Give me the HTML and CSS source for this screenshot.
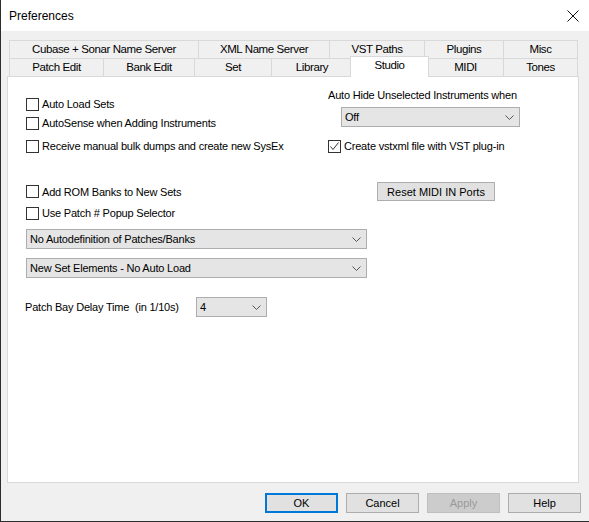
FILE: index.html
```html
<!DOCTYPE html>
<html lang="en">
<head>
    <meta charset="UTF-8">
    <title>Preferences</title>
    <link rel="stylesheet" href="styles.css">
</head>
<body>
    <div class="window">
        <div class="titlebar">
            <span class="title">Preferences</span>
            <svg class="close" width="12" height="12" viewBox="0 0 12 12">
                <path d="M0.5 0.5 L11.5 11.5 M11.5 0.5 L0.5 11.5" stroke="#111" stroke-width="1" fill="none"/>
            </svg>
        </div>

        <div class="dialog">
            <!-- two rows of tabs, Studio is the active one -->
            <div class="tabs">
                <div class="tab-row row-top">
                    <div class="tab">Cubase + Sonar Name Server</div>
                    <div class="tab">XML Name Server</div>
                    <div class="tab">VST Paths</div>
                    <div class="tab">Plugins</div>
                    <div class="tab">Misc</div>
                </div>
                <div class="tab-row row-bottom">
                    <div class="tab">Patch Edit</div>
                    <div class="tab">Bank Edit</div>
                    <div class="tab">Set</div>
                    <div class="tab">Library</div>
                    <div class="tab active">Studio</div>
                    <div class="tab">MIDI</div>
                    <div class="tab">Tones</div>
                </div>
            </div>

            <div class="panel">
                <div class="top-block">
                    <div class="col-left">
                        <label class="check"><span class="box"></span>Auto Load Sets</label>
                        <label class="check second"><span class="box"></span>AutoSense when Adding Instruments</label>
                        <label class="check third"><span class="box"></span>Receive manual bulk dumps and create new SysEx</label>
                    </div>
                    <div class="col-right">
                        <div class="caption">Auto Hide Unselected Instruments when</div>
                        <div class="combo combo-hide"><span>Off</span><svg class="chevron" width="9" height="5" viewBox="0 0 9 5"><path d="M0.5 0.5 L4.5 4.5 L8.5 0.5" stroke="#555" fill="none"/></svg></div>
                        <label class="check third"><span class="box"><svg width="11" height="11" viewBox="0 0 11 11"><path d="M1.5 5.5 L4 8.5 L9.5 1.5" stroke="#333" stroke-width="1" fill="none"/></svg></span>Create vstxml file with VST plug-in</label>
                    </div>
                </div>

                <div class="mid-row">
                    <label class="check rom"><span class="box"></span>Add ROM Banks to New Sets</label>
                    <button class="btn reset">Reset MIDI IN Ports</button>
                </div>
                <label class="check popup"><span class="box"></span>Use Patch # Popup Selector</label>

                <div class="combo combo-wide first-wide"><span>No Autodefinition of Patches/Banks</span><svg class="chevron" width="9" height="5" viewBox="0 0 9 5"><path d="M0.5 0.5 L4.5 4.5 L8.5 0.5" stroke="#555" fill="none"/></svg></div>
                <div class="combo combo-wide second-wide"><span>New Set Elements - No Auto Load</span><svg class="chevron" width="9" height="5" viewBox="0 0 9 5"><path d="M0.5 0.5 L4.5 4.5 L8.5 0.5" stroke="#555" fill="none"/></svg></div>

                <div class="delay-row">
                    <span class="delay-label">Patch Bay Delay Time  (in 1/10s)</span>
                    <div class="combo combo-small"><span>4</span><svg class="chevron" width="9" height="5" viewBox="0 0 9 5"><path d="M0.5 0.5 L4.5 4.5 L8.5 0.5" stroke="#555" fill="none"/></svg></div>
                </div>
            </div>

            <div class="buttons">
                <button class="btn dlg default">OK</button>
                <button class="btn dlg">Cancel</button>
                <button class="btn dlg" disabled>Apply</button>
                <button class="btn dlg">Help</button>
            </div>
        </div>
    </div>
</body>
</html>
```

FILE: styles.css
```css
html, body {
    margin: 0;
    padding: 0;
    background-color: #2b2b2b;
}
.window {
    width: 589px;
    height: 522px;
    box-sizing: border-box;
    border-left: 1px solid #2d2d2d;
    border-bottom: 1px solid #2d2d2d;
    background-color: #f0f0f0;
    overflow: hidden;
}
.titlebar {
    height: 31px;
    background-color: #fff;
    display: flex;
    align-items: center;
    justify-content: space-between;
    padding: 0 10px 0 8px;
    font-family: "Liberation Sans", Arial, sans-serif;
    font-size: 12px;
    color: #000;
}
.close {
    display: block;
}
.dialog {
    height: 490px;
    box-sizing: border-box;
    padding: 9px 8px 0 6px;
}

/* tabs */
.tabs {
    margin-left: 2px;
    width: 569px;
    font-family: "Liberation Sans", Arial, sans-serif;
    font-size: 11.5px;
    letter-spacing: -0.4px;
}
.tab-row {
    display: grid;
    height: 18px;
}
.row-top {
    grid-template-columns: 189px 131px 95px 79px 75px;
}
.row-bottom {
    grid-template-columns: 94px 91px 77px 81px 75px 76px 75px;
}
.tab {
    box-sizing: border-box;
    height: 18px;
    border-top: 1px solid #d9d9d9;
    border-left: 1px solid #d9d9d9;
    background-color: #f0f0f0;
    text-align: center;
    line-height: 17px;
    color: #000;
    white-space: nowrap;
}
.tab:last-child {
    border-right: 1px solid #d9d9d9;
}
.tab.active {
    position: relative;
    z-index: 1;
    height: 21px;
    margin: -2px -2px -1px -2px;
    border: 1px solid #d9d9d9;
    border-bottom: none;
    background-color: #fff;
    line-height: 16px;
}

/* page body */
.panel {
    width: 572px;
    height: 407px;
    box-sizing: border-box;
    border: 1px solid #d9d9d9;
    background-color: #fff;
    padding-left: 18px;
    font-family: "Liberation Sans", Arial, sans-serif;
    font-size: 11px;
    letter-spacing: -0.2px;
    color: #000;
}
.top-block {
    display: flex;
}
.col-left {
    width: 302px;
    padding-top: 19px;
}
.col-right {
    padding-top: 11px;
}
.caption {
    line-height: 14px;
}
.check {
    display: flex;
    align-items: center;
    gap: 3px;
    height: 16px;
    white-space: nowrap;
}
.check.second {
    margin-top: 3px;
}
.check.third {
    margin-top: 7px;
}
.col-right .check.third {
    margin-top: 11px;
}
.box {
    width: 13px;
    height: 13px;
    box-sizing: border-box;
    border: 1px solid #333;
    background-color: #fff;
    flex-shrink: 0;
    position: relative;
}
.box svg {
    display: block;
    position: absolute;
    left: 0;
    top: 0;
}
.combo {
    height: 20px;
    box-sizing: border-box;
    border: 1px solid #adadad;
    background-color: #e5e5e5;
    display: flex;
    align-items: center;
    justify-content: space-between;
    padding: 0 5px 0 3px;
    white-space: nowrap;
}
.combo-hide {
    width: 179px;
    margin: 5px 0 0 13px;
}
.combo-wide {
    width: 341px;
}
.first-wide {
    margin-top: 8px;
}
.second-wide {
    margin-top: 9px;
}
.combo-small {
    width: 71px;
}
.chevron {
    display: block;
}
.mid-row {
    display: flex;
    align-items: center;
    height: 19px;
    margin-top: 28px;
}
.rom {
    width: 302px;
}
.popup {
    margin-top: 4px;
}
.delay-row {
    display: flex;
    align-items: center;
    margin-top: 19px;
    margin-left: -1px;
}
.delay-label {
    width: 171px;
    white-space: pre;
}

/* buttons */
.btn {
    box-sizing: border-box;
    border: 1px solid #adadad;
    background-color: #e1e1e1;
    color: #000;
    padding: 0;
    font-family: "Liberation Sans", Arial, sans-serif;
    font-size: 11px;
    letter-spacing: 0;
}
.reset {
    width: 118px;
    height: 19px;
    margin-left: 49px;
    line-height: 16px;
}
.buttons {
    display: flex;
    justify-content: flex-end;
    gap: 8px;
    margin-top: 10px;
}
.dlg {
    width: 73px;
    height: 20px;
    line-height: 17px;
}
.dlg.default {
    border: 2px solid #0078d7;
}
.dlg:disabled {
    background-color: #cccccc;
    border-color: #bfbfbf;
    color: #9a9a9a;
}
```
